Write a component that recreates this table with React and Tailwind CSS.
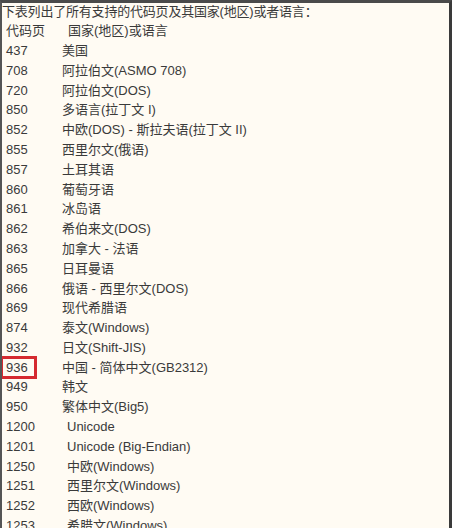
import React from "react";

const rows = [
  ["437", "美国", 62],
  ["708", "阿拉伯文(ASMO 708)", 62],
  ["720", "阿拉伯文(DOS)", 62],
  ["850", "多语言(拉丁文 I)", 62],
  ["852", "中欧(DOS) - 斯拉夫语(拉丁文 II)", 62],
  ["855", "西里尔文(俄语)", 62],
  ["857", "土耳其语", 62],
  ["860", "葡萄牙语", 62],
  ["861", "冰岛语", 62],
  ["862", "希伯来文(DOS)", 62],
  ["863", "加拿大 - 法语", 62],
  ["865", "日耳曼语", 62],
  ["866", "俄语 - 西里尔文(DOS)", 62],
  ["869", "现代希腊语", 62],
  ["874", "泰文(Windows)", 62],
  ["932", "日文(Shift-JIS)", 62],
  ["936", "中国 - 简体中文(GB2312)", 62],
  ["949", "韩文", 62],
  ["950", "繁体中文(Big5)", 62],
  ["1200", "Unicode", 67],
  ["1201", "Unicode (Big-Endian)", 67],
  ["1250", "中欧(Windows)", 67],
  ["1251", "西里尔文(Windows)", 67],
  ["1252", "西欧(Windows)", 67],
  ["1253", "希腊文(Windows)", 67],
];

const offsets = {
  62: "pl-[56px]",
  67: "pl-[61px]",
};

export default function App() {
  return (
    <div className="w-[452px] h-[528px] overflow-hidden bg-[#fffbf3] border-t-[3px] border-t-[#4a4a4a] border-l-2 border-l-[#555] border-r-[3px] border-r-[#3a3a3a] text-[13px] text-[#3a3a3a] font-['Liberation_Sans','Noto_Sans_CJK_SC',sans-serif]">
      {/* Intro line */}
      <div className="h-[18px] leading-[17px] whitespace-nowrap tracking-[-0.2px]">
        下表列出了所有支持的代码页及其国家(地区)或者语言：
      </div>

      {/* Column heads */}
      <div className="h-[19.8px] flex items-center whitespace-nowrap">
        <span className="w-[60px] pl-[4px]">代码页</span>
        <span className="pl-[6px]">国家(地区)或语言</span>
      </div>

      {rows.map(([code, name, x]) => (
        <div key={code} className="h-[19.8px] flex items-center whitespace-nowrap">
          <span className="w-[4px]" />
          <span className="relative w-[0px]">
            {code === "936" && (
              <span className="absolute left-[-6px] top-[-11px] w-[37px] h-[23px] border-[3px] border-[#d52a30]" />
            )}
          </span>
          <span className="w-[0px]">{code}</span>
          <span className={offsets[x]}>{name}</span>
        </div>
      ))}
    </div>
  );
}
